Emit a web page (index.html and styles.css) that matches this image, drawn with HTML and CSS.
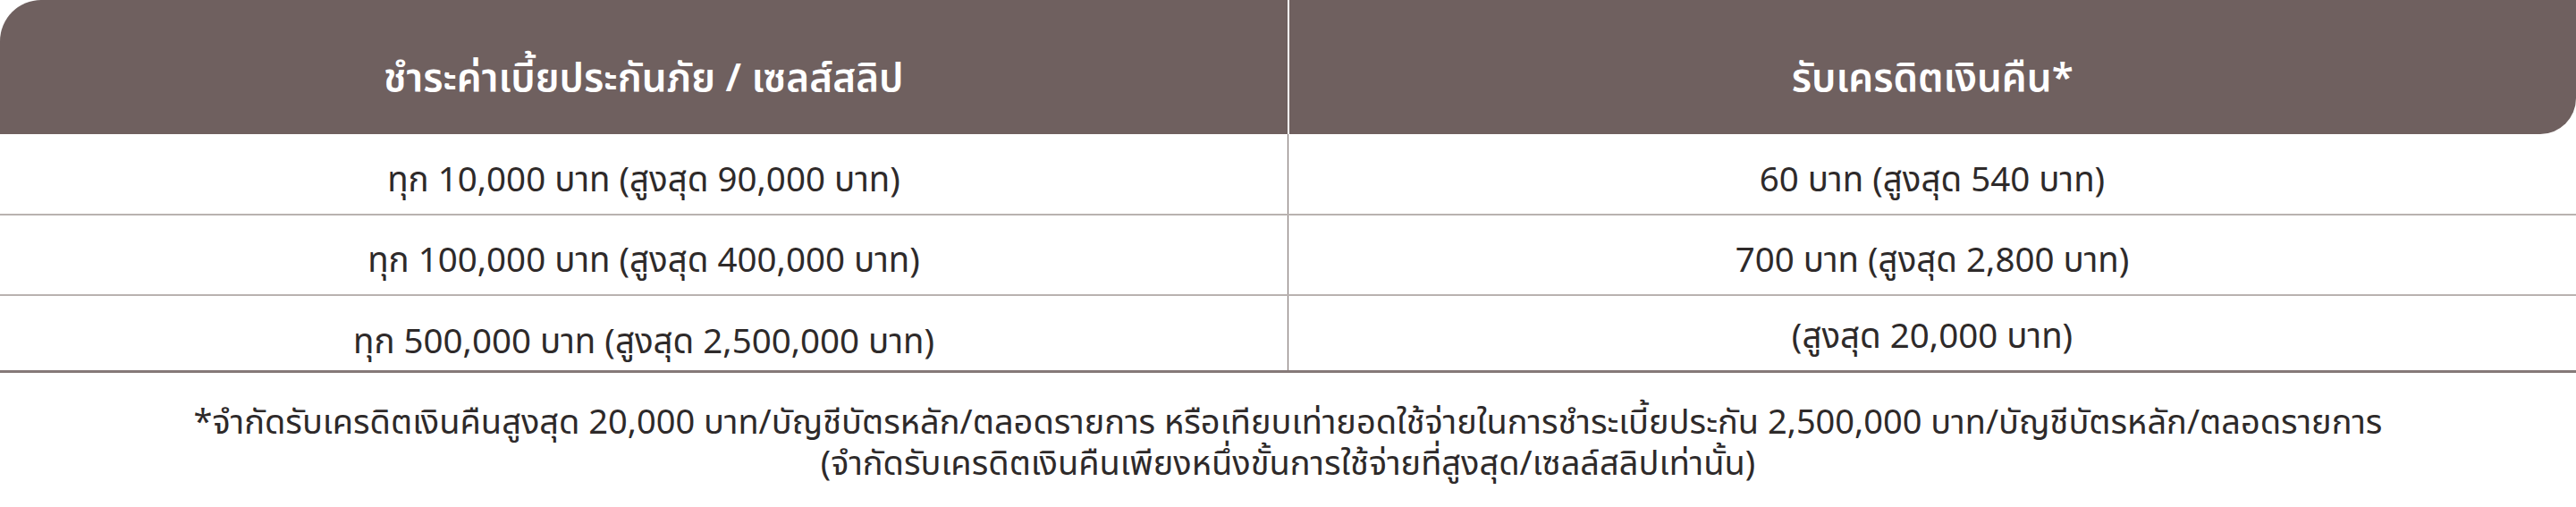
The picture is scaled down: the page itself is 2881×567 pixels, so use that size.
FILE: index.html
```html
<!DOCTYPE html>
<html lang="th">
<head>
<meta charset="utf-8">
<link rel="stylesheet" href="styles.css">
</head>
<body>
<div class="page">
  <table class="rates">
    <thead>
      <tr>
        <th class="col-left">ชำระค่าเบี้ยประกันภัย / เซลส์สลิป</th>
        <th class="col-right">รับเครดิตเงินคืน*</th>
      </tr>
    </thead>
    <tbody>
      <tr class="row">
        <td>ทุก 10,000 บาท (สูงสุด 90,000 บาท)</td>
        <td>60 บาท (สูงสุด 540 บาท)</td>
      </tr>
      <tr class="row">
        <td>ทุก 100,000 บาท (สูงสุด 400,000 บาท)</td>
        <td>700 บาท (สูงสุด 2,800 บาท)</td>
      </tr>
      <tr class="row row-last">
        <td class="low">ทุก 500,000 บาท (สูงสุด 2,500,000 บาท)</td>
        <td>(สูงสุด 20,000 บาท)</td>
      </tr>
    </tbody>
  </table>
  <div class="note">
    <p>*จำกัดรับเครดิตเงินคืนสูงสุด 20,000 บาท/บัญชีบัตรหลัก/ตลอดรายการ หรือเทียบเท่ายอดใช้จ่ายในการชำระเบี้ยประกัน 2,500,000 บาท/บัญชีบัตรหลัก/ตลอดรายการ</p>
    <p>(จำกัดรับเครดิตเงินคืนเพียงหนึ่งขั้นการใช้จ่ายที่สูงสุด/เซลล์สลิปเท่านั้น)</p>
  </div>
</div>
</body>
</html>
```

FILE: styles.css
```css
html, body {
  margin: 0;
  padding: 0;
  background: #ffffff;
}

body {
  font-family: "Noto Sans Thai", "Noto Sans Thai UI", "Noto Sans", sans-serif;
  color: #2e2a2a;
}

.page {
  width: 2881px;
}

.rates {
  width: 100%;
  border-collapse: collapse;
  table-layout: fixed;
}

.rates th {
  background: #6f605f;
  color: #ffffff;
  font-size: 44px;
  font-weight: 600;
  height: 150px;
  padding: 26px 0 0 0;
  box-sizing: border-box;
  text-align: center;
  vertical-align: middle;
}

.rates th.col-left {
  border-top-left-radius: 46px;
  border-right: 2px solid #ffffff;
}

.rates th.col-right {
  border-bottom-right-radius: 40px;
}

.rates td {
  font-size: 38.5px;
  font-weight: 400;
  text-align: center;
  vertical-align: middle;
  height: 90px;
  padding: 14px 0 0 0;
  box-sizing: border-box;
  border-bottom: 2px solid #b9b2b0;
}

.rates td:first-child {
  border-right: 1px solid #7a6d6c;
}

.rates .row-last td {
  height: 85px;
  padding-top: 10px;
  border-bottom: 3px solid #857978;
}

.rates .row-last td.low {
  padding-top: 22px;
}

.note {
  padding-top: 34px;
  text-align: center;
  font-size: 38px;
  line-height: 46px;
  color: #2e2a2a;
}

.note p {
  margin: 0;
}
```
